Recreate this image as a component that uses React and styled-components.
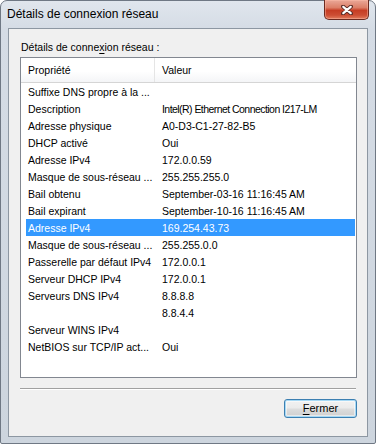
import React from "react";
import styled, { createGlobalStyle } from "styled-components";

const Global = createGlobalStyle`
  html, body { margin: 0; padding: 0; background: #ffffff; }
  body { width: 376px; height: 444px; overflow: hidden; }
  #root { width: 376px; height: 444px; }
`;

const Window = styled.div`
  box-sizing: border-box;
  width: 376px;
  height: 444px;
  display: flex;
  flex-direction: column;
  padding: 0 7px 6px 7px;
  border: 1px solid #6f7884;
  border-radius: 7px 7px 2px 2px;
  background: linear-gradient(180deg, #e0e6ed 0px, #d5dce5 28px, #cdd5de 100%);
  font-family: "Liberation Sans", Arial, sans-serif;
`;

const TitleBar = styled.div`
  height: 28px;
  display: flex;
  align-items: flex-start;
  justify-content: space-between;
  margin: 0 -1px;
`;

const Title = styled.div`
  font-size: 12px;
  color: #000;
  padding-top: 6px;
  line-height: 15px;
`;

const CloseButton = styled.div`
  box-sizing: border-box;
  width: 45px;
  height: 20px;
  margin-top: -1px;
  border: 1px solid #6b2a20;
  border-top: none;
  border-radius: 0 0 5px 5px;
  background: linear-gradient(
    180deg,
    #eaa898 0%,
    #dc7f68 40%,
    #c63d24 55%,
    #cd4e34 80%,
    #e27d5e 100%
  );
  box-shadow: inset 0 0 0 1px rgba(255, 190, 170, 0.45);
  display: flex;
  align-items: center;
  justify-content: center;
`;

const Client = styled.div`
  flex: 1;
  display: flex;
  flex-direction: column;
  border: 1px solid #8d97a2;
  background: #f0f0f0;
  padding: 11px 10px 18px 11px;
  font-size: 10.5px;
  color: #000;
`;

const GroupLabel = styled.div`
  line-height: 13px;
  height: 13px;
  padding-top: 1px;
  margin-left: 1px;
  margin-bottom: 3px;
`;

const Key = styled.span`
  text-decoration: underline;
  text-underline-offset: 2px;
`;

const ListView = styled.div`
  box-sizing: border-box;
  height: 321px;
  border: 1px solid #828790;
  background: #ffffff;
  display: flex;
  flex-direction: column;
`;

const Header = styled.div`
  box-sizing: border-box;
  height: 25px;
  display: flex;
  background: linear-gradient(180deg, #ffffff 0%, #ffffff 55%, #f4f5f7 100%);
  border-bottom: 1px solid #d5d5d5;
`;

const HeaderCell = styled.div`
  box-sizing: border-box;
  width: ${(p) => p.$w}px;
  flex: ${(p) => (p.$grow ? 1 : "none")};
  padding: 1px 0 0 7px;
  line-height: 23px;
  border-right: ${(p) => (p.$grow ? "none" : "1px solid #e5e5e5")};
`;

const Rows = styled.div`
  display: flex;
  flex-direction: column;
  margin: 0 1px 0 5px;
`;

const Row = styled.div`
  box-sizing: border-box;
  height: 17px;
  padding-top: 1px;
  display: flex;
  line-height: 16px;
  background: ${(p) => (p.$selected ? "#3399ff" : "transparent")};
  color: ${(p) => (p.$selected ? "#ffffff" : "#000000")};
  white-space: nowrap;
`;

const Cell = styled.div`
  box-sizing: border-box;
  width: ${(p) => (p.$grow ? "auto" : "134px")};
  flex: ${(p) => (p.$grow ? 1 : "none")};
  padding-left: 2px;
  overflow: hidden;
  letter-spacing: ${(p) => p.$track || "normal"};
`;

const Separator = styled.div`
  height: 1px;
  margin-top: 10px;
  margin-right: 1px;
  background: #a0a0a0;
  border-bottom: 1px solid #ffffff;
`;

const ButtonRow = styled.div`
  display: flex;
  justify-content: flex-end;
  margin-top: 9px;
`;

const Button = styled.div`
  box-sizing: border-box;
  width: 73px;
  height: 19px;
  border: 1px solid #3c7fb1;
  border-radius: 3px;
  background: linear-gradient(
    180deg,
    #f2f2f2 0%,
    #ebebeb 48%,
    #dddddd 52%,
    #cfcfcf 100%
  );
  box-shadow: inset 0 0 0 1px #a7d9f5, inset 0 0 0 2px rgba(255, 255, 255, 0.5);
  display: flex;
  align-items: center;
  justify-content: center;
  font-size: 11px;
  line-height: 13px;
`;

const rows = [
  ["Suffixe DNS propre à la ...", ""],
  ["Description", "Intel(R) Ethernet Connection I217-LM", false, "-0.55px"],
  ["Adresse physique", "A0-D3-C1-27-82-B5"],
  ["DHCP activé", "Oui"],
  ["Adresse IPv4", "172.0.0.59"],
  ["Masque de sous-réseau ...", "255.255.255.0"],
  ["Bail obtenu", "September-03-16 11:16:45 AM"],
  ["Bail expirant", "September-10-16 11:16:45 AM"],
  ["Adresse IPv4", "169.254.43.73", true],
  ["Masque de sous-réseau ...", "255.255.0.0"],
  ["Passerelle par défaut IPv4", "172.0.0.1"],
  ["Serveur DHCP IPv4", "172.0.0.1"],
  ["Serveurs DNS IPv4", "8.8.8.8"],
  ["", "8.8.4.4"],
  ["Serveur WINS IPv4", ""],
  ["NetBIOS sur TCP/IP act...", "Oui"],
];

const CloseGlyph = () => (
  <svg width="12" height="10" viewBox="0 0 12 10">
    <path d="M2 1.5 L10 8.5 M10 1.5 L2 8.5" stroke="#5a2b25" strokeWidth="4" strokeLinecap="round" />
    <path d="M2.3 1.8 L9.7 8.2 M9.7 1.8 L2.3 8.2" stroke="#ffffff" strokeWidth="2.2" strokeLinecap="round" />
  </svg>
);

export default function App() {
  return (
    <>
      <Global />
      <Window>
        <TitleBar>
          <Title>Détails de connexion réseau</Title>
          <CloseButton>
            <CloseGlyph />
          </CloseButton>
        </TitleBar>
        <Client>
          <GroupLabel>
            Détails de conne<Key>x</Key>ion réseau :
          </GroupLabel>
          <ListView>
            <Header>
              <HeaderCell $w={134}>Propriété</HeaderCell>
              <HeaderCell $grow>Valeur</HeaderCell>
            </Header>
            <Rows>
              {rows.map(([k, v, sel, track], i) => (
                <Row key={i} $selected={sel}>
                  <Cell>{k}</Cell>
                  <Cell $grow $track={track}>{v}</Cell>
                </Row>
              ))}
            </Rows>
          </ListView>
          <Separator />
          <ButtonRow>
            <Button>
              <span>
                <Key>F</Key>ermer
              </span>
            </Button>
          </ButtonRow>
        </Client>
      </Window>
    </>
  );
}
